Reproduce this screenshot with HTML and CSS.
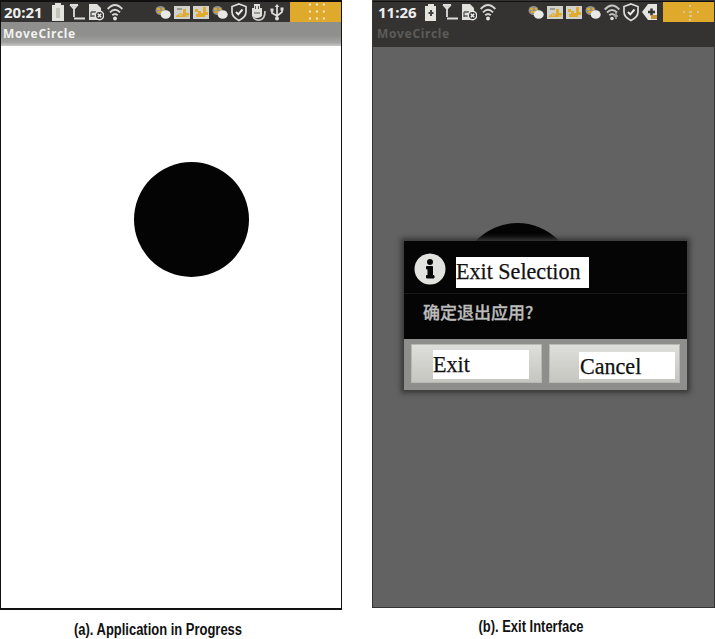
FILE: index.html
```
<!DOCTYPE html>
<html lang="en">
<head>
<meta charset="utf-8">
<title>MoveCircle</title>
<link rel="stylesheet" href="styles.css">
</head>
<body>
<svg class="defs" width="0" height="0">
  <symbol id="battery" viewBox="0 0 16 20"><path d="M5 1h6v2h3v16H2V3h3z" fill="#e4e4df"/><path d="M6 6h4v10H6z" fill="#c3c5b8"/></symbol>
  <symbol id="charging" viewBox="0 0 16 20"><path d="M5 2h6v2h2v15H2V4h3z" fill="#e4e4df"/><path d="M8 8v6M5.500 11h5" stroke="#444" stroke-width="2"/></symbol>
  <symbol id="signal" viewBox="0 0 16 20"><path d="M1 2.500l4 4.500 4-4.500M1 3h8M5 4v11M5 16.500h11" fill="none" stroke="#ddd" stroke-width="1.800"/></symbol>
  <symbol id="sim" viewBox="0 0 16 20"><path d="M1 2h8l4 4v12H1z" fill="#e0e0dc"/><path d="M3 10h5M3 14h4M3 10v5" stroke="#555" stroke-width="1.300"/><circle cx="11.500" cy="13.500" r="4.200" fill="#333" stroke="#e5e5e5" stroke-width="1.500"/><path d="M9.800 11.800l3.400 3.400m0-3.400l-3.400 3.400" stroke="#eee" stroke-width="1.500"/></symbol>
  <symbol id="wifi" viewBox="0 0 16 20"><path d="M.7 7Q8-1 15.300 7M3 10.300q5-5 10 0M5.300 13.300q2.700-2.600 5.400 0" fill="none" stroke="#d7d7d5" stroke-width="1.900"/><circle cx="8" cy="16.500" r="1.900" fill="#e4e4e4"/></symbol>
  <symbol id="wifi-lock" viewBox="0 0 16 20"><path d="M.7 7.500Q8-.5 15.300 7.500M3 10.500q5-5 10 0M5.300 13.300q2.700-2.600 5.400 0" fill="none" stroke="#c5c5c3" stroke-width="2"/><circle cx="8" cy="16.500" r="1.800" fill="#ddd"/><path d="M12 10v7m-2-3h4" stroke="#aaa" stroke-width="1.500"/></symbol>
  <symbol id="chat" viewBox="0 0 16 20"><ellipse cx="5.500" cy="8.500" rx="5" ry="4.500" fill="#92928c"/><path d="M2 7h3m2 0h2M3 10h4" stroke="#dfa92d" stroke-width="1.800"/><ellipse cx="10.700" cy="12.500" rx="5" ry="4.300" fill="#e8e8e6"/></symbol>
  <symbol id="photo" viewBox="0 0 16 20"><path d="M0 4h16v13H0z" fill="#d2d2cc"/><path d="M3 7h5" stroke="#888" stroke-width="1.500"/><path d="M2 14l4-3 3 1V7h3v4h3v4H2z" fill="#e0ab2f"/><path d="M5 13h3m4 1h3" stroke="#d2d2cc"/></symbol>
  <symbol id="map" viewBox="0 0 16 20"><path d="M0 4h16v13H0z" fill="#d2d2cc"/><path d="M2 7h3v2h3v2h2V5h3v5h2v3h-3v2H3v-3h2v-2H2z" fill="#e0ab2f"/></symbol>
  <symbol id="shield" viewBox="0 0 16 20"><path d="M8 2l7 2.500v5.300q0 5.500-7 8.700-7-3.200-7-8.700V4.500z" fill="none" stroke="#ddd" stroke-width="1.700"/><path d="M5 10l2.300 2.300L11.500 7.500" fill="none" stroke="#eee" stroke-width="1.900"/></symbol>
  <symbol id="mouse" viewBox="0 0 16 20"><path d="M4 2h6v4h2v8q-4 4-10 0V6h2z" fill="#dedeDA"/><path d="M5.500 4v3m3-3v3M4 11h6" stroke="#555"/><path d="M3 14q1 4.500 7 4 5-1 5-9" fill="none" stroke="#ccc" stroke-width="1.700"/></symbol>
  <symbol id="usb" viewBox="0 0 16 20"><path d="M8 4v11M3 8v3l5 3 5-4V7" fill="none" stroke="#ddd" stroke-width="1.700"/><path d="M5.700 5L8 2l2.300 3zM1.500 6.500h3v3h-3zM11.500 5.500h3v3h-3z" fill="#ddd"/><circle cx="8" cy="16.500" r="2" fill="#ddd"/></symbol>
  <symbol id="back" viewBox="0 0 16 20"><path d="M0 10l6-8h9v16H6z" fill="#e4e4e0"/><path d="M6 10h7M9.500 6.500v7" stroke="#333" stroke-width="2.500"/><path d="M9 13h6v4H9z" fill="#c7993a"/></symbol>
</svg>
<main class="figure">
  <figure class="panel">
    <div class="phone light">
      <div class="status">
        <span class="clock">20:21</span>
        <div class="icons left"><svg><use href="#battery"/></svg><svg><use href="#signal"/></svg><svg><use href="#sim"/></svg><svg><use href="#wifi"/></svg></div>
        <div class="icons right"><svg><use href="#chat"/></svg><svg><use href="#photo"/></svg><svg><use href="#map"/></svg><svg><use href="#chat"/></svg><svg><use href="#shield"/></svg><svg><use href="#mouse"/></svg><svg><use href="#usb"/></svg></div>
        <svg class="badge" viewBox="0 0 51 21"><path d="M19 2.500h2m5 0h2m5 0h2M19 9.500h2m5 0h2m5 0h2M19 16.500h2m5 0h2m5 0h2" stroke="#f0e9d8" stroke-width="2"/></svg>
      </div>
      <div class="title">MoveCircle</div>
      <div class="canvas"><div class="ball"></div></div>
    </div>
    <figcaption>(a). Application in Progress</figcaption>
  </figure>
  <figure class="panel">
    <div class="phone dim">
      <div class="status">
        <span class="clock">11:26</span>
        <div class="icons left"><svg><use href="#charging"/></svg><svg><use href="#signal"/></svg><svg><use href="#sim"/></svg><svg><use href="#wifi"/></svg></div>
        <div class="icons right"><svg><use href="#chat"/></svg><svg><use href="#photo"/></svg><svg><use href="#map"/></svg><svg><use href="#chat"/></svg><svg><use href="#wifi-lock"/></svg><svg><use href="#shield"/></svg><svg><use href="#back"/></svg></div>
        <svg class="badge" viewBox="0 0 51 21"><path d="M26 4h2M20 10h2m4 0h3m5 0h2M26 14h3M26 18h2" stroke="#d9cfb5" stroke-width="1.500"/></svg>
      </div>
      <div class="title">MoveCircle</div>
      <div class="canvas">
        <div class="ball"></div>
        <section class="dialog">
          <header><svg class="info" viewBox="0 0 32 32"><circle cx="16" cy="16" r="15.500" fill="#e2e2df"/><circle cx="16" cy="9" r="3" fill="#080808"/><path d="M12.500 13.500h6v9H20v2.500h-7.500v-2.500H14v-6.500h-1.500z" fill="#080808" stroke="#080808"/></svg><h1><span>Exit Selection</span></h1></header>
          <p lang="zh">确定退出应用?</p>
          <div class="actions"><button class="exit"><span><b>Exit</b></span></button><button class="cancel"><span><b>Cancel</b></span></button></div>
        </section>
      </div>
    </div>
    <figcaption>(b). Exit Interface</figcaption>
  </figure>
</main>
</body>
</html>
```
FILE: styles.css
```
* { box-sizing: border-box; }
body { margin: 0; background: #fff; overflow: hidden; }
.defs { display: block; }
.figure { display: grid; grid-template-columns: 342px 343px; column-gap: 30px; height: 639px; }
.panel { margin: 0; }
.phone { display: flex; flex-direction: column; border: 1px solid #111; overflow: hidden; }
.light { height: 610px; background: #fff; border-width: 1px 1px 2px; }
.dim { height: 608px; background: #626262; border-color: #333; }
.status { display: flex; align-items: center; flex: none; height: 21px; background: #343331; border-top: 1px solid #111; }
.clock { width: 50px; padding-left: 3px; color: #eee; font: bold 15px/20px "Noto Sans", sans-serif; }
.light .clock { width: 49px; }
.dim .clock { padding-left: 5px; }
.icons { display: flex; gap: 3px; }
.icons svg { width: 16px; height: 20px; margin-top: -1px; }
.left { width: 105px; }
.right { width: 135px; }
.badge { width: 51px; height: 21px; background: #dfaa2c; }
.light .badge { margin-left: 1px; }
.title { flex: none; height: 24px; padding-left: 2px; color: #f2f2f0; background: linear-gradient(#8f8f8d 55%, #a3a3a1 85%, #c8c8c6); font: bold 12px/23px "Noto Sans", sans-serif; letter-spacing: .7px; }
.dim .title { height: 25px; padding-left: 4px; color: #5c5c5a; background: #343331; }
.canvas { position: relative; flex: 1; }
.ball { width: 115px; height: 115px; margin: 116px 0 0 133px; border-radius: 50%; background: #040404; }
.dim .ball { position: absolute; left: 87px; top: 176px; margin: 0; }
.dialog { position: absolute; left: 31px; top: 194px; width: 283px; height: 149px; display: flex; flex-direction: column; background: #050505; box-shadow: 0 0 5px 3px #393938; }
.dialog header { display: flex; align-items: center; height: 52px; padding: 4px 0 0 10px; }
.info { width: 32px; height: 32px; margin-top: -1px; }
.dialog h1 { width: 133px; height: 31px; margin: 6px 0 0 10px; background: #fff; color: #111; font: 23px/30px "Liberation Serif", serif; white-space: nowrap; }
.dialog h1 span, .actions b { display: inline-block; font-weight: normal; transform: scaleX(.96); transform-origin: left; -webkit-text-stroke: .25px #111; }
.dialog p { flex: 1; margin: 0; padding: 6px 0 0 19px; border-top: 1px solid #191919; color: #bcbcbc; font: 500 17px/24px "Noto Sans CJK SC", sans-serif; -webkit-text-stroke: .3px #bcbcbc; }
.actions { display: grid; grid-template-columns: 131px 131px; gap: 7px; height: 51px; padding: 5px 7px 7px; background: #8e8e8c; }
.actions button { display: flex; padding: 0; border: 1px solid #b8b8b5; background: linear-gradient(#dededb, #c5c6bf); }
.actions button span { height: 29px; background: #fff; color: #111; font: 23px/29px "Liberation Serif", serif; text-align: left; }
.exit span { width: 96px; margin: 5px 0 0 21px; }
.actions .cancel span { width: 96px; height: 27px; margin: 7px 0 0 29px; padding-left: 1px; }
figcaption { color: #111; font: bold 16px/20px "Liberation Sans Narrow", "Liberation Sans", sans-serif; text-align: center; white-space: nowrap; transform: scaleX(.81); }
.light + figcaption { padding-top: 10px; margin-left: -26px; }
.dim + figcaption { padding-top: 9px; margin-left: -25px; }
```
